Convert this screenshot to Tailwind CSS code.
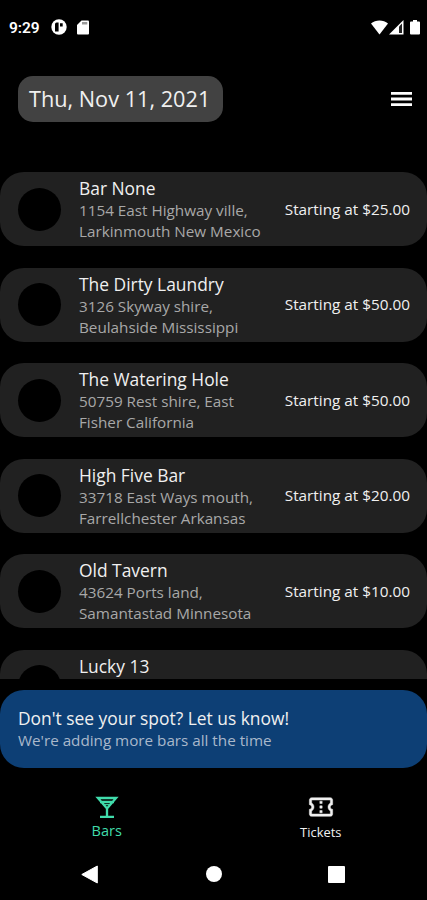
<!DOCTYPE html>
<html lang="en">
<head>
<meta charset="utf-8">
<meta name="viewport" content="width=device-width, initial-scale=1">
<title>Bars</title>
<script src="https://cdn.jsdelivr.net/npm/@tailwindcss/browser@4"></script>
</head>
<body class="bg-black">
<div class="flex h-[900px] w-[427px] flex-col overflow-hidden bg-black font-['Open_Sans',sans-serif] text-[#f0f0f0]">

  <!-- Status bar -->
  <header class="flex h-[54px] shrink-0 items-center pr-[7px] pl-[9px] font-['Roboto',sans-serif]">
    <span class="w-[42px] pt-[2px] text-[15.500px] leading-5 font-semibold tracking-[-0.1px] text-white">9:29</span>
    <svg class="size-4" viewBox="0 0 16 16"><circle cx="8" cy="8" r="7.700" fill="#fff"/><path d="M4 5.200Q4 3.600 5.600 3.600H7.600V12.500H4zM9 4.200h2.700v3.300H9z" fill="#000"/></svg>
    <svg class="ml-[10px] h-[15px] w-3" viewBox="0 0 12 15"><path d="M4.500.5H11a1 1 0 0 1 1 1v12a1 1 0 0 1-1 1H1a1 1 0 0 1-1-1V5z" fill="#fff"/><path d="M5 2h5.300v2.500H5z" fill="#999"/></svg>
    <svg class="ml-auto h-[15px] w-[17px]" viewBox="0 0 17 15"><path d="M0 3.600C4.500 -.6 12.500 -.6 17 3.600L8.500 14.500z" fill="#fff"/></svg>
    <svg class="ml-px h-[15px] w-[15px]" viewBox="0 0 15 15"><path d="M0 14.500 14.500 0v14.500z" fill="#fff"/><path d="M10 6.500 13 3.500V13h-3z" fill="#222"/></svg>
    <svg class="ml-[6px] h-[15px] w-[10px]" viewBox="0 0 10 15"><path d="M3 0h4v1.500h2a1 1 0 0 1 1 1v11a1 1 0 0 1-1 1H1a1 1 0 0 1-1-1v-11a1 1 0 0 1 1-1h2z" fill="#fff"/></svg>
  </header>

  <!-- Date and menu -->
  <div class="mt-[22px] flex h-[46px] shrink-0 items-center justify-between pr-[15px] pl-[18px]">
    <button class="h-[46px] w-[205px] rounded-[15px] bg-[#424242] pl-[11px] text-left text-[21.700px] whitespace-nowrap">Thu, Nov 11, 2021</button>
    <svg class="h-[15px] w-[21px]" viewBox="0 0 21 15" fill="#fff"><path d="M0 0h21v2.800H0zM0 5.600h21v2.800H0zM0 11.200h21v2.800H0z"/></svg>
  </div>

  <!-- Bar list -->
  <main class="mt-[50px] flex h-[507px] shrink-0 flex-col gap-[21.500px] overflow-hidden">
    <article class="flex h-[74px] shrink-0 items-center rounded-[24px] bg-[#212121] pr-[17px] pl-[18px]">
      <div class="size-[43px] rounded-full bg-black"></div>
      <div class="ml-[18px] h-[74px] pt-[4px] whitespace-nowrap">
        <h2 class="text-[17.400px] leading-[24px]">Bar None</h2>
        <p class="text-[15.250px] leading-[21px] text-[#a8a8a8]">1154 East Highway ville,<br>Larkinmouth New Mexico</p>
      </div>
      <span class="ml-auto text-[15.300px] whitespace-nowrap">Starting at $25.00</span>
    </article>
    <article class="flex h-[74px] shrink-0 items-center rounded-[24px] bg-[#212121] pr-[17px] pl-[18px]">
      <div class="size-[43px] rounded-full bg-black"></div>
      <div class="ml-[18px] h-[74px] pt-[4px] whitespace-nowrap">
        <h2 class="text-[17.400px] leading-[24px]">The Dirty Laundry</h2>
        <p class="text-[15.250px] leading-[21px] text-[#a8a8a8]">3126 Skyway shire,<br>Beulahside Mississippi</p>
      </div>
      <span class="ml-auto text-[15.300px] whitespace-nowrap">Starting at $50.00</span>
    </article>
    <article class="flex h-[74px] shrink-0 items-center rounded-[24px] bg-[#212121] pr-[17px] pl-[18px]">
      <div class="size-[43px] rounded-full bg-black"></div>
      <div class="ml-[18px] h-[74px] pt-[4px] whitespace-nowrap">
        <h2 class="text-[17.400px] leading-[24px]">The Watering Hole</h2>
        <p class="text-[15.250px] leading-[21px] text-[#a8a8a8]">50759 Rest shire, East<br>Fisher California</p>
      </div>
      <span class="ml-auto text-[15.300px] whitespace-nowrap">Starting at $50.00</span>
    </article>
    <article class="flex h-[74px] shrink-0 items-center rounded-[24px] bg-[#212121] pr-[17px] pl-[18px]">
      <div class="size-[43px] rounded-full bg-black"></div>
      <div class="ml-[18px] h-[74px] pt-[4px] whitespace-nowrap">
        <h2 class="text-[17.400px] leading-[24px]">High Five Bar</h2>
        <p class="text-[15.250px] leading-[21px] text-[#a8a8a8]">33718 East Ways mouth,<br>Farrellchester Arkansas</p>
      </div>
      <span class="ml-auto text-[15.300px] whitespace-nowrap">Starting at $20.00</span>
    </article>
    <article class="flex h-[74px] shrink-0 items-center rounded-[24px] bg-[#212121] pr-[17px] pl-[18px]">
      <div class="size-[43px] rounded-full bg-black"></div>
      <div class="ml-[18px] h-[74px] pt-[4px] whitespace-nowrap">
        <h2 class="text-[17.400px] leading-[24px]">Old Tavern</h2>
        <p class="text-[15.250px] leading-[21px] text-[#a8a8a8]">43624 Ports land,<br>Samantastad Minnesota</p>
      </div>
      <span class="ml-auto text-[15.300px] whitespace-nowrap">Starting at $10.00</span>
    </article>
    <article class="flex h-[74px] shrink-0 items-center rounded-[24px] bg-[#212121] pr-[17px] pl-[18px]">
      <div class="size-[43px] rounded-full bg-black"></div>
      <div class="ml-[18px] h-[74px] pt-[4px] whitespace-nowrap">
        <h2 class="text-[17.400px] leading-[24px]">Lucky 13</h2>
      </div>
    </article>
  </main>

  <!-- Suggestion banner -->
  <section class="mt-[10.500px] h-[78.500px] shrink-0 rounded-[24px] bg-[#0d3f75] pt-[16px] pl-[18px] whitespace-nowrap">
    <h2 class="text-[17.400px] leading-[24px]">Don't see your spot? Let us know!</h2>
    <p class="text-[15.230px] leading-[21px] text-[#a9b8cb]">We're adding more bars all the time</p>
  </section>

  <!-- Tabs -->
  <nav class="grid h-[80px] shrink-0 grid-cols-2">
    <a class="flex flex-col items-center pt-[25px] text-[#40dcab]">
      <svg class="size-7" viewBox="0 0 24 24" fill="none" stroke="currentColor" stroke-width="2"><path d="M4.200 4.300h15.600L12 13.300zM6 7.700h12M12 13v7M6 20.400h12"/><path d="M9.500 10h5" stroke-width="1"/></svg>
      <span class="text-[14.500px] leading-5">Bars</span>
    </a>
    <a class="flex flex-col items-center pt-[25px] pl-px">
      <svg class="size-7" viewBox="0 0 24 24" fill="currentColor" stroke="currentColor" stroke-width=".4"><path d="M22 10V6c0-1.110-.9-2-2-2H4c-1.100 0-1.990.89-1.990 2v4c1.100 0 1.990.9 1.990 2s-.89 2-2 2v4c0 1.100.9 2 2 2h16c1.100 0 2-.9 2-2v-4c-1.100 0-2-.9-2-2s.9-2 2-2zm-2-1.460c-1.190.69-2 1.990-2 3.460s.81 2.770 2 3.460V18H4v-2.540c1.190-.69 2-1.990 2-3.460 0-1.480-.8-2.770-1.990-3.460L4 6h16v2.540zM11 15h2v2h-2zm0-4h2v2h-2zm0-4h2v2h-2z"/></svg>
      <span class="pt-px text-[12.900px] leading-5">Tickets</span>
    </a>
  </nav>

  <!-- System navigation -->
  <footer class="flex h-[52px] items-center justify-between pr-[82px] pl-[81px]">
    <svg class="h-[19px] w-[17px]" viewBox="0 0 17 19"><path d="M.8 9.500 16.300 1v17z" fill="#fff" stroke="#fff" stroke-linejoin="round"/></svg>
    <div class="ml-px size-4 rounded-full bg-white"></div>
    <div class="size-[17px] rounded-[1px] bg-white"></div>
  </footer>
</div>
</body>
</html>
